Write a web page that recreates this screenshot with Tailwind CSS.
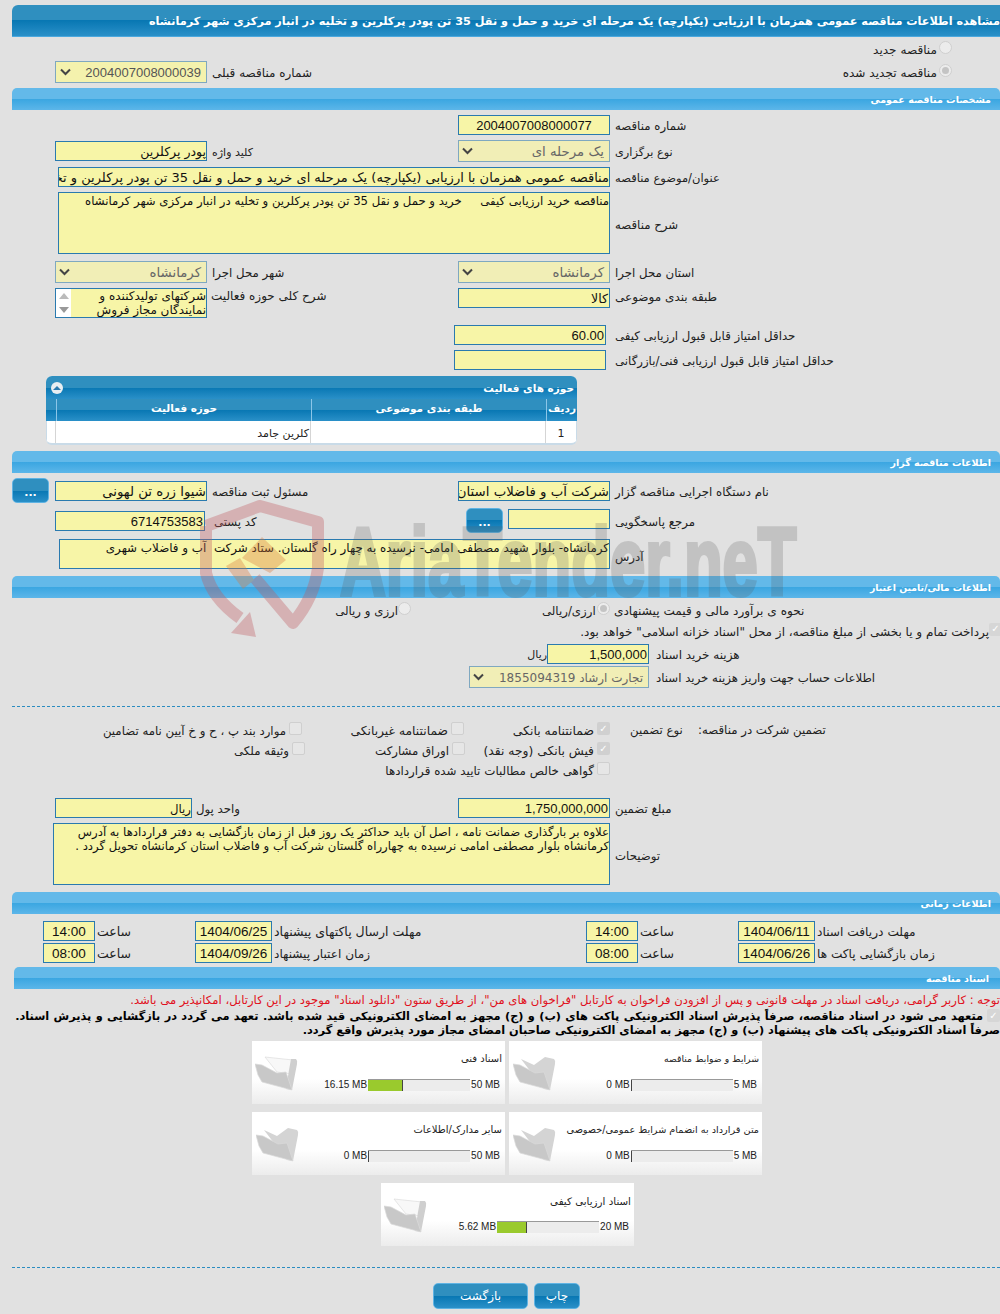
<!DOCTYPE html>
<html lang="fa">
<head>
<meta charset="utf-8">
<script src="https://cdn.jsdelivr.net/npm/@tailwindcss/browser@4"></script>
<title>مشاهده اطلاعات مناقصه</title>
</head>
<body class="m-0">
<div class="relative w-[1000px] h-[1314px] overflow-hidden bg-[#e1e1e1] text-[11.75px] leading-[16px] text-[#222] font-['DejaVu_Sans',sans-serif] pt-[5px] [&_span[dir=rtl]]:pt-[2px] [&_span]:whitespace-nowrap">

<!-- title -->
<div dir="rtl" class="ml-[12px] h-[32px] rounded-tl-[6px] overflow-hidden border-b border-[#4aa8de] bg-[linear-gradient(#2f8fbf_0,#2f8fbf_50%,#0877b3_50%,#2a90c8_100%)] text-white font-bold text-[11.25px] leading-[33px] whitespace-nowrap">مشاهده اطلاعات مناقصه عمومی همزمان با ارزیابی (یکپارچه) یک مرحله ای خرید و حمل و نقل 35 تن پودر پرکلرین و تخلیه در انبار مرکزی شهر کرمانشاه</div>

<!-- radios -->
<div class="mt-[3px] h-[18px] flex justify-end items-center pr-[48px] gap-[2px]">
  <span dir="rtl" class="text-[12.1px]">مناقصه جدید</span>
  <span class="size-[13px] rounded-full border border-[#cfcfcf] bg-[#ececec] -mt-[3px]"></span>
</div>
<div class="mt-[3px] h-[22px] grid grid-cols-[458px_1fr] items-center">
  <div class="flex items-center pl-[55px] gap-[5px]">
    <div class="w-[152px] h-[22px] border border-[#7fa8c0] bg-[#f4f2ad] flex items-center justify-between pl-[4px] pr-[5px] text-[#555]"><svg class="w-[11px] h-[8px]" viewBox="0 0 11 8"><path d="M1 1.5 5.5 6 10 1.5" fill="none" stroke="#444" stroke-width="2"/></svg><span class="pt-[2px] text-[13px] font-['Liberation_Sans',sans-serif]">2004007008000039</span></div>
    <span dir="rtl" class="text-[12px]">شماره مناقصه قبلی</span>
  </div>
  <div class="flex justify-end items-center pr-[48px] gap-[2px]">
    <span dir="rtl" class="text-[12.1px]">مناقصه تجدید شده</span>
    <span class="size-[13px] rounded-full border border-[#cfcfcf] bg-[#ececec] -mt-[3px] flex items-center justify-center"><span class="size-[7px] rounded-full bg-[#c4c4c4]"></span></span>
  </div>
</div>

<!-- section -->
<div dir="rtl" class="mt-[5px] ml-[12px] h-[22px] rounded-t-[5px] bg-[linear-gradient(#63b9e9_0,#63b9e9_50%,#3aa6e1_50%,#5cb6e9_100%)] text-white font-bold text-[9.5px] leading-[24px] pr-[9px]">مشخصات مناقصه عمومی</div>

<div class="mt-[5px] h-[20px] flex items-center pl-[458px] gap-[5px]">
  <div class="w-[152px] h-[20px] border border-[#2a7aaf] bg-[#f7f5a7] text-center text-[13px] leading-[20px] text-[#111] font-['Liberation_Sans',sans-serif]">2004007008000077</div>
  <span dir="rtl">شماره مناقصه</span>
</div>

<div class="mt-[5px] h-[22px] grid grid-cols-[458px_1fr] items-center">
  <div class="flex items-center pl-[55px] gap-[5px]">
    <div dir="rtl" class="w-[152px] h-[20px] border border-[#2a7aaf] bg-[#f7f5a7] overflow-hidden whitespace-nowrap text-[12.5px] leading-[20px] text-[#111]">پودر پرکلرین</div>
    <span dir="rtl" class="text-[11px] mt-[2px]">کلید واژه</span>
  </div>
  <div class="flex items-center gap-[5px]">
    <div class="w-[152px] h-[22px] border border-[#7fa8c0] bg-[#f1eeb6] flex items-center justify-between pl-[3px] pr-[5px] text-[#666]"><svg class="w-[11px] h-[8px]" viewBox="0 0 11 8"><path d="M1 1.5 5.5 6 10 1.5" fill="none" stroke="#444" stroke-width="2"/></svg><span dir="rtl" class="text-[13.3px]">یک مرحله ای</span></div>
    <span dir="rtl" class="text-[11.3px] mt-[2px]">نوع برگزاری</span>
  </div>
</div>

<div class="mt-[5px] h-[20px] flex items-center pl-[58px] gap-[5px]">
  <div dir="rtl" class="w-[552px] h-[20px] border border-[#2a7aaf] bg-[#f7f5a7] overflow-hidden whitespace-nowrap text-[13px] leading-[20px] text-[#111]">مناقصه عمومی همزمان با ارزیابی (یکپارچه) یک مرحله ای خرید و حمل و نقل 35 تن پودر پرکلرین و تخلیه در انبار مرکزی شهر کرمانشاه</div>
  <span dir="rtl" class="text-[11.5px]">عنوان/موضوع مناقصه</span>
</div>

<div class="mt-[5px] h-[62px] flex items-center pl-[58px] gap-[5px]">
  <div dir="rtl" class="w-[552px] h-[62px] border border-[#2a7aaf] bg-[#f7f5a7] overflow-hidden whitespace-pre text-[11.7px] leading-[16px] text-[#111]">مناقصه خرید ارزیابی کیفی     خرید و حمل و نقل 35 تن پودر پرکلرین و تخلیه در انبار مرکزی شهر کرمانشاه</div>
  <span dir="rtl" class="mt-[1px]">شرح مناقصه</span>
</div>

<div class="mt-[7px] h-[22px] grid grid-cols-[458px_1fr] items-center">
  <div class="flex items-center pl-[55px] gap-[5px]">
    <div class="w-[152px] h-[22px] border border-[#7fa8c0] bg-[#f1eeb6] flex items-center justify-between pl-[3px] pr-[5px] text-[#666]"><svg class="w-[11px] h-[8px]" viewBox="0 0 11 8"><path d="M1 1.5 5.5 6 10 1.5" fill="none" stroke="#444" stroke-width="2"/></svg><span dir="rtl" class="text-[13.3px]">کرمانشاه</span></div>
    <span dir="rtl">شهر محل اجرا</span>
  </div>
  <div class="flex items-center gap-[5px]">
    <div class="w-[152px] h-[22px] border border-[#7fa8c0] bg-[#f1eeb6] flex items-center justify-between pl-[3px] pr-[5px] text-[#666]"><svg class="w-[11px] h-[8px]" viewBox="0 0 11 8"><path d="M1 1.5 5.5 6 10 1.5" fill="none" stroke="#444" stroke-width="2"/></svg><span dir="rtl" class="text-[13.3px]">کرمانشاه</span></div>
    <span dir="rtl">استان محل اجرا</span>
  </div>
</div>

<div class="mt-[5px] h-[30px] grid grid-cols-[458px_1fr] items-start">
  <div class="flex items-start pl-[55px] gap-[4px]">
    <div class="w-[152px] h-[30px] border border-[#2a7aaf] bg-[#f7f5a7] flex overflow-hidden">
      <div class="w-[15px] shrink-0 bg-white flex flex-col justify-between items-center py-[4px]">
        <span class="w-0 h-0 border-x-[5px] border-x-transparent border-b-[6px] border-b-[#bbb]"></span>
        <span class="w-0 h-0 border-x-[5px] border-x-transparent border-t-[6px] border-t-[#999]"></span>
      </div>
      <div dir="rtl" class="flex-1 text-[12px] leading-[14px] text-[#111]">شرکتهای تولیدکننده و نمایندگان مجاز فروش</div>
    </div>
    <span dir="rtl" class="text-[12px] -mt-[2px]">شرح کلی حوزه فعالیت</span>
  </div>
  <div class="flex items-center gap-[5px]">
    <div dir="rtl" class="w-[152px] h-[20px] border border-[#2a7aaf] bg-[#f7f5a7] text-[12.5px] leading-[20px] text-[#111] pr-[1px]">کالا</div>
    <span dir="rtl" class="text-[12px] -mt-[4px]">طبقه بندی موضوعی</span>
  </div>
</div>

<div class="mt-[7px] h-[20px] flex items-center pl-[454px]">
  <div class="w-[152px] h-[20px] border border-[#2a7aaf] bg-[#f7f5a7] text-right pr-[1px] text-[13px] leading-[20px] text-[#111] font-['Liberation_Sans',sans-serif]">60.00</div>
  <span dir="rtl" class="ml-[9px]">حداقل امتیاز قابل قبول ارزیابی کیفی</span>
</div>
<div class="mt-[5px] h-[20px] flex items-center pl-[454px]">
  <div class="w-[152px] h-[20px] border border-[#2a7aaf] bg-[#f7f5a7]"></div>
  <span dir="rtl" class="ml-[9px]">حداقل امتیاز قابل قبول ارزیابی فنی/بازرگانی</span>
</div>

<!-- activity table -->
<div dir="rtl" class="mt-[6px] ml-[46px] w-[531px] h-[69px] rounded-[6px] border-b-2 border-[#c9dbe8] overflow-hidden bg-white">
  <div class="h-[23px] flex items-center justify-between pr-[3px] pl-[5px] bg-[linear-gradient(#2f8fbf_0,#2f8fbf_50%,#0877b3_50%,#2a90c8_100%)] text-white font-bold text-[10.5px]">
    <span>حوزه های فعالیت</span>
    <span class="size-[12px] rounded-full bg-[#e8eef2] flex items-center justify-center"><span class="w-0 h-0 border-x-[4px] border-x-transparent border-b-[4px] border-b-[#2a7aaf]"></span></span>
  </div>
  <div class="h-[22px] grid grid-cols-[31px_235px_255px_10px] bg-[linear-gradient(#2f8fbf_0,#2f8fbf_50%,#0877b3_50%,#2a90c8_100%)] text-white font-bold text-[10.5px] leading-[19px] text-center">
    <div class="border-l border-[#8cc6e8]">ردیف</div>
    <div class="border-l border-[#8cc6e8]">طبقه بندی موضوعی</div>
    <div class="border-l border-[#8cc6e8]">حوزه فعالیت</div>
    <div></div>
  </div>
  <div class="h-[22px] grid grid-cols-[31px_235px_255px_10px] text-[11px] leading-[26px] border-x border-[#c9dbe8]">
    <div class="border-l border-[#d5d5d5] text-center">1</div>
    <div class="border-l border-[#d5d5d5]"></div>
    <div class="border-l border-[#d5d5d5] pr-[1px]">کلرین جامد</div>
    <div></div>
  </div>
</div>

<div dir="rtl" class="mt-[6px] ml-[12px] h-[22px] rounded-t-[5px] bg-[linear-gradient(#63b9e9_0,#63b9e9_50%,#3aa6e1_50%,#5cb6e9_100%)] text-white font-bold text-[9.5px] leading-[24px] pr-[9px]">اطلاعات مناقصه گزار</div>

<div class="mt-[5px] h-[25px] grid grid-cols-[458px_1fr] items-center">
  <div class="flex items-center pl-[12px]">
    <div class="w-[37px] h-[25px] rounded-[5px] border border-[#5fb3e3] bg-[linear-gradient(#2f8fbf_0,#2f8fbf_50%,#0877b3_50%,#2a90c8_100%)] text-white font-bold text-[11px] text-center leading-[28px]">...</div>
    <div dir="rtl" class="ml-[6px] w-[152px] h-[20px] border border-[#2a7aaf] bg-[#f7f5a7] overflow-hidden whitespace-nowrap text-[13.3px] leading-[20px] text-[#111]">شیوا زره تن لهونی</div>
    <span dir="rtl" class="ml-[5px]">مسئول ثبت مناقصه</span>
  </div>
  <div class="flex items-center gap-[5px]">
    <div dir="rtl" class="w-[152px] h-[20px] border border-[#2a7aaf] bg-[#f7f5a7] overflow-hidden whitespace-nowrap text-[13.3px] leading-[20px] text-[#111]">شرکت آب و فاضلاب استان کرمانشاه</div>
    <span dir="rtl">نام دستگاه اجرایی مناقصه گزار</span>
  </div>
</div>

<div class="mt-[5px] h-[25px] grid grid-cols-[458px_1fr] items-center">
  <div class="flex items-center pl-[55px]">
    <div class="w-[150px] h-[20px] border border-[#2a7aaf] bg-[#f7f5a7] text-right pr-[1px] text-[13px] leading-[20px] text-[#111] font-['Liberation_Sans',sans-serif]">6714753583</div>
    <span dir="rtl" class="ml-[9px]">کد پستی</span>
  </div>
  <div class="flex items-center pl-[8px]">
    <div class="w-[37px] h-[25px] rounded-[5px] border border-[#5fb3e3] bg-[linear-gradient(#2f8fbf_0,#2f8fbf_50%,#0877b3_50%,#2a90c8_100%)] text-white font-bold text-[11px] text-center leading-[28px]">...</div>
    <div class="ml-[5px] w-[102px] h-[20px] -mt-[3px] border border-[#2a7aaf] bg-[#f7f5a7]"></div>
    <span dir="rtl" class="ml-[5px]">مرجع پاسخگویی</span>
  </div>
</div>

<div class="mt-[6px] h-[30px] flex items-center pl-[59px] gap-[5px]">
  <div dir="rtl" class="w-[551px] h-[30px] border border-[#2a7aaf] bg-[#f7f5a7] overflow-hidden whitespace-pre text-[11.9px] leading-[16px] text-[#111]">کرمانشاه- بلوار شهید مصطفی امامی- نرسیده به چهار راه گلستان. ستاد شرکت  آب و فاضلاب شهری</div>
  <span dir="rtl" class="mt-[3px]">آدرس</span>
</div>

<div dir="rtl" class="mt-[7px] ml-[12px] h-[22px] rounded-t-[5px] bg-[linear-gradient(#63b9e9_0,#63b9e9_50%,#3aa6e1_50%,#5cb6e9_100%)] text-white font-bold text-[9.3px] leading-[24px] pr-[9px]">اطلاعات مالی/تامین اعتبار</div>

<div class="mt-[2px] h-[20px] flex items-center pl-[336px]">
  <span dir="rtl" class="w-[62px] text-left">ارزی و ریالی</span>
  <span class="size-[13px] rounded-full border border-[#cfcfcf] bg-[#ececec] -mt-[3px]"></span>
  <span dir="rtl" class="ml-[131px] w-[55px] text-left">ارزی/ریالی</span>
  <span class="size-[13px] rounded-full border border-[#cfcfcf] bg-[#ececec] -mt-[3px] flex items-center justify-center"><span class="size-[7px] rounded-full bg-[#c4c4c4]"></span></span>
  <span dir="rtl" class="ml-[4px] text-[12.1px]">نحوه ی برآورد مالی و قیمت پیشنهادی</span>
</div>

<div class="mt-[1px] h-[19px] flex justify-end items-center">
  <span dir="rtl" class="whitespace-pre text-[12px]">پرداخت تمام و یا بخشی از مبلغ مناقصه، از محل "اسناد خزانه اسلامی" خواهد بود.</span>
  <span class="shrink-0 size-[13px] -mr-[2px] rounded-[2px] bg-[#d6d6d6] -mt-[3px] flex items-center justify-center text-white text-[10px] font-bold">✓</span>
</div>

<div class="mt-[4px] h-[20px] flex items-center pl-[528px]">
  <span dir="rtl" class="w-[19px] text-left text-[11px]">ریال</span>
  <div class="w-[102px] h-[20px] border border-[#2a7aaf] bg-[#f7f5a7] text-right pr-[1px] text-[13px] leading-[20px] text-[#111] font-['Liberation_Sans',sans-serif]">1,500,000</div>
  <span dir="rtl" class="ml-[7px] text-[12px]">هزینه خرید اسناد</span>
</div>

<div class="mt-[2px] h-[22px] flex items-center pl-[469px]">
  <div class="w-[180px] h-[22px] border border-[#7fa8c0] bg-[#f1eeb6] flex items-center justify-between pl-[3px] pr-[5px] text-[#666]"><svg class="w-[11px] h-[8px]" viewBox="0 0 11 8"><path d="M1 1.5 5.5 6 10 1.5" fill="none" stroke="#444" stroke-width="2"/></svg><span dir="rtl" class="text-[12px]">تجارت ارشاد 1855094319</span></div>
  <span dir="rtl" class="ml-[7px]">اطلاعات حساب جهت واریز هزینه خرید اسناد</span>
</div>

<div class="mt-[18px] ml-[12px] h-0 border-t border-dashed border-[#2a8cc0]"></div>

<!-- guarantee -->
<div class="mt-[13px] h-[20px] grid grid-cols-[104px_198px_162px_146px_20px_53px_15px_1fr] items-center">
  <span></span>
  <span dir="rtl" class="flex items-center"><span class="size-[13px] rounded-[2px] border border-[#cfcfcf] bg-[#e6e6e6] -mt-[5px] shrink-0"></span><span class="mr-[3px]">موارد بند پ ، ح و خ آیین نامه تضامین</span></span>
  <span dir="rtl" class="flex items-center"><span class="size-[13px] rounded-[2px] border border-[#cfcfcf] bg-[#e6e6e6] -mt-[5px] shrink-0"></span><span class="mr-[3px] text-[12.3px]">ضمانتنامه غیربانکی</span></span>
  <span dir="rtl" class="flex items-center"><span class="size-[13px] rounded-[2px] bg-[#d0d0d0] text-white text-[10px] font-bold leading-[13px] text-center -mt-[5px] shrink-0">✓</span><span class="mr-[3px] text-[12.4px]">ضمانتنامه بانکی</span></span>
  <span></span>
  <span dir="rtl" class="text-left -mt-[2px]">نوع تضمین</span>
  <span></span>
  <span dir="rtl" class="text-left -mt-[2px]">تضمین شرکت در مناقصه:</span>
</div>
<div class="h-[20px] grid grid-cols-[104px_201px_160px_145px] items-center">
  <span></span>
  <span dir="rtl" class="flex items-center"><span class="size-[13px] rounded-[2px] border border-[#cfcfcf] bg-[#e6e6e6] -mt-[5px] shrink-0"></span><span class="mr-[3px]">وثیقه ملکی</span></span>
  <span dir="rtl" class="flex items-center"><span class="size-[13px] rounded-[2px] border border-[#cfcfcf] bg-[#e6e6e6] -mt-[5px] shrink-0"></span><span class="mr-[3px]">اوراق مشارکت</span></span>
  <span dir="rtl" class="flex items-center"><span class="size-[13px] rounded-[2px] bg-[#d0d0d0] text-white text-[10px] font-bold leading-[13px] text-center -mt-[5px] shrink-0">✓</span><span class="mr-[3px] text-[12.3px]">فیش بانکی (وجه نقد)</span></span>
</div>
<div class="h-[20px] pl-[364px] flex items-center">
  <span dir="rtl" class="flex items-center w-[246px]"><span class="size-[13px] rounded-[2px] border border-[#cfcfcf] bg-[#e6e6e6] -mt-[5px] shrink-0"></span><span class="mr-[3px] text-[11.9px]">گواهی خالص مطالبات تایید شده قراردادها</span></span>
</div>

<div class="mt-[18px] h-[20px] grid grid-cols-[458px_1fr] items-center">
  <div class="flex items-center pl-[55px]">
    <div dir="rtl" class="w-[137px] h-[20px] border border-[#2a7aaf] bg-[#f7f5a7] text-[11.7px] leading-[20px] text-[#111]">ریال</div>
    <span dir="rtl" class="ml-[4px]">واحد پول</span>
  </div>
  <div class="flex items-center gap-[5px]">
    <div class="w-[152px] h-[20px] border border-[#2a7aaf] bg-[#f7f5a7] text-right pr-[1px] text-[13px] leading-[20px] text-[#111] font-['Liberation_Sans',sans-serif]">1,750,000,000</div>
    <span dir="rtl">مبلغ تضمین</span>
  </div>
</div>

<div class="mt-[5px] h-[62px] flex items-center pl-[53px] gap-[5px]">
  <div dir="rtl" class="w-[557px] h-[62px] border border-[#2a7aaf] bg-[#f7f5a7] overflow-hidden whitespace-nowrap text-[11.7px] leading-[14px] text-[#111] pt-[1px]">علاوه بر بارگذاری ضمانت نامه ، اصل آن باید حداکثر یک روز قبل از زمان بازگشایی به دفتر قراردادها به آدرس<br>کرمانشاه بلوار مصطفی امامی نرسیده به چهارراه گلستان شرکت آب و فاضلاب استان کرمانشاه تحویل گردد .</div>
  <span dir="rtl" class="mt-[1px]">توضیحات</span>
</div>

<div dir="rtl" class="mt-[7px] ml-[12px] h-[22px] rounded-t-[5px] bg-[linear-gradient(#63b9e9_0,#63b9e9_50%,#3aa6e1_50%,#5cb6e9_100%)] text-white font-bold text-[9.5px] leading-[24px] pr-[9px]">اطلاعات زمانی</div>

<div class="mt-[7px] h-[20px] grid grid-cols-[43px_152px_391px_152px_1fr] items-center">
  <span></span>
  <div class="flex items-center gap-[2px]"><div class="w-[52px] h-[20px] border border-[#2a7aaf] bg-[#f7f5a7] text-center text-[13.5px] leading-[20px] text-[#111] font-['Liberation_Sans',sans-serif]">14:00</div><span dir="rtl" class="text-[12.5px]">ساعت</span></div>
  <div class="flex items-center gap-[2px]"><div class="w-[77px] h-[20px] border border-[#2a7aaf] bg-[#f7f5a7] text-center text-[13.5px] leading-[20px] text-[#111] font-['Liberation_Sans',sans-serif]">1404/06/25</div><span dir="rtl" class="text-[12.5px]">مهلت ارسال پاکتهای پیشنهاد</span></div>
  <div class="flex items-center gap-[2px]"><div class="w-[52px] h-[20px] border border-[#2a7aaf] bg-[#f7f5a7] text-center text-[13.5px] leading-[20px] text-[#111] font-['Liberation_Sans',sans-serif]">14:00</div><span dir="rtl" class="text-[12.5px]">ساعت</span></div>
  <div class="flex items-center gap-[2px]"><div class="w-[77px] h-[20px] border border-[#2a7aaf] bg-[#f7f5a7] text-center text-[13.5px] leading-[20px] text-[#111] font-['Liberation_Sans',sans-serif]">1404/06/11</div><span dir="rtl" class="text-[12.2px]">مهلت دریافت اسناد</span></div>
</div>
<div class="mt-[2px] h-[20px] grid grid-cols-[43px_152px_391px_152px_1fr] items-center">
  <span></span>
  <div class="flex items-center gap-[2px]"><div class="w-[52px] h-[20px] border border-[#2a7aaf] bg-[#f7f5a7] text-center text-[13.5px] leading-[20px] text-[#111] font-['Liberation_Sans',sans-serif]">08:00</div><span dir="rtl" class="text-[12.5px]">ساعت</span></div>
  <div class="flex items-center gap-[2px]"><div class="w-[77px] h-[20px] border border-[#2a7aaf] bg-[#f7f5a7] text-center text-[13.5px] leading-[20px] text-[#111] font-['Liberation_Sans',sans-serif]">1404/09/26</div><span dir="rtl" class="text-[12.1px]">زمان اعتبار پیشنهاد</span></div>
  <div class="flex items-center gap-[2px]"><div class="w-[52px] h-[20px] border border-[#2a7aaf] bg-[#f7f5a7] text-center text-[13.5px] leading-[20px] text-[#111] font-['Liberation_Sans',sans-serif]">08:00</div><span dir="rtl" class="text-[12.5px]">ساعت</span></div>
  <div class="flex items-center gap-[2px]"><div class="w-[77px] h-[20px] border border-[#2a7aaf] bg-[#f7f5a7] text-center text-[13.5px] leading-[20px] text-[#111] font-['Liberation_Sans',sans-serif]">1404/06/26</div><span dir="rtl" class="text-[12.1px]">زمان بازگشایی پاکت ها</span></div>
</div>

<div dir="rtl" class="mt-[4px] ml-[14px] h-[22px] rounded-t-[5px] bg-[linear-gradient(#63b9e9_0,#63b9e9_50%,#3aa6e1_50%,#5cb6e9_100%)] text-white font-bold text-[9.5px] leading-[24px] pr-[11px]">اسناد مناقصه</div>

<div dir="rtl" class="mt-[2px] h-[18px] whitespace-nowrap text-[11.63px] leading-[18px] text-[#e01020]">توجه : کاربر گرامی، دریافت اسناد در مهلت قانونی و پس از افزودن فراخوان به کارتابل "فراخوان های من"، از طریق ستون "دانلود اسناد" موجود در این کارتابل، امکانپذیر می باشد.</div>

<div dir="rtl" class="h-[28px] whitespace-nowrap font-bold text-[11.35px] leading-[14px] text-black">
  <span class="inline-block size-[13px] rounded-[2px] bg-[#d6d6d6] text-white text-[10px] leading-[13px] text-center align-top">✓</span> <span class="[word-spacing:.4px]">متعهد می شود در اسناد مناقصه، صرفاً پذیرش اسناد الکترونیکی پاکت های (ب) و (ج) مجهز به امضای الکترونیکی قید شده باشد. تعهد می گردد در بازگشایی و پذیرش اسناد.</span><br>صرفاً اسناد الکترونیکی پاکت های پیشنهاد (ب) و (ج) مجهز به امضای الکترونیکی صاحبان امضای مجاز مورد پذیرش واقع گردد.
</div>

<!-- cards -->
<div class="mt-[4px] flex pl-[252px] gap-[4px]">
  <div class="w-[253px] h-[63px] flex bg-[linear-gradient(#fff_0,#fff_60%,#ececec_100%)]">
    <svg class="w-[43px] h-[35px] ml-[3px] mt-[15px] shrink-0" viewBox="0 0 43 35"><path d="M10 1 L38 4 L37 18 L22 16 Z" fill="#f8f8f8" stroke="#dcdcdc" stroke-width=".7"/><path d="M36 3 L41 3 Q43 5 42 8 L37 34 L31 33 L34 14 Z" fill="#cfcfcf"/><path d="M0 8 L7 9 L22 17 L31 16 L37 34 L7 26 L3 19 Z" fill="#c8c8c8" stroke="#dadada" stroke-width=".7"/></svg>
    <div class="flex-1 flex flex-col items-end pr-[5px] text-[10px]">
      <span dir="rtl" class="mt-[8px] mr-[-2px] h-[16px]">اسناد فنی</span>
      <div class="mt-[12px] flex items-center gap-[1px] font-['Liberation_Sans',sans-serif]"><span>16.15 MB</span><div class="w-[102px] h-[12px] border-t border-[#999] bg-[#ececec]"><div class="w-[35px] h-[11px] bg-[#9aca2d] border-r border-[#444]"></div></div><span>50 MB</span></div>
    </div>
  </div>
  <div class="w-[253px] h-[63px] flex bg-[linear-gradient(#fff_0,#fff_60%,#ececec_100%)]">
    <svg class="w-[43px] h-[35px] ml-[4px] mt-[15px] shrink-0" viewBox="0 0 43 35"><path d="M8 3 L21 9 L32 1 L41 3 Q43 5 42 8 L37 34 L31 33 Z" fill="#d4d4d4"/><path d="M0 8 L7 9 L22 17 L31 16 L37 34 L7 26 L3 19 Z" fill="#c8c8c8" stroke="#dadada" stroke-width=".7"/></svg>
    <div class="flex-1 flex flex-col items-end pr-[5px] text-[10px]">
      <span dir="rtl" class="mt-[8px] mr-[-2px] h-[16px] text-[9.3px]">شرایط و ضوابط مناقصه</span>
      <div class="mt-[12px] flex items-center gap-[1px] font-['Liberation_Sans',sans-serif]"><span>0 MB</span><div class="w-[102px] h-[12px] border-t border-[#999] bg-[#ececec]"><div class="w-[1px] h-[11px] bg-[#444]"></div></div><span>5 MB</span></div>
    </div>
  </div>
</div>
<div class="mt-[8px] flex pl-[252px] gap-[4px]">
  <div class="w-[253px] h-[63px] flex bg-[linear-gradient(#fff_0,#fff_60%,#ececec_100%)]">
    <svg class="w-[43px] h-[35px] ml-[4px] mt-[15px] shrink-0" viewBox="0 0 43 35"><path d="M8 3 L21 9 L32 1 L41 3 Q43 5 42 8 L37 34 L31 33 Z" fill="#d4d4d4"/><path d="M0 8 L7 9 L22 17 L31 16 L37 34 L7 26 L3 19 Z" fill="#c8c8c8" stroke="#dadada" stroke-width=".7"/></svg>
    <div class="flex-1 flex flex-col items-end pr-[5px] text-[10px]">
      <span dir="rtl" class="mt-[8px] mr-[-2px] h-[16px]">سایر مدارک/اطلاعات</span>
      <div class="mt-[12px] flex items-center gap-[1px] font-['Liberation_Sans',sans-serif]"><span>0 MB</span><div class="w-[102px] h-[12px] border-t border-[#999] bg-[#ececec]"><div class="w-[1px] h-[11px] bg-[#444]"></div></div><span>50 MB</span></div>
    </div>
  </div>
  <div class="w-[253px] h-[63px] flex bg-[linear-gradient(#fff_0,#fff_60%,#ececec_100%)]">
    <svg class="w-[43px] h-[35px] ml-[4px] mt-[15px] shrink-0" viewBox="0 0 43 35"><path d="M8 3 L21 9 L32 1 L41 3 Q43 5 42 8 L37 34 L31 33 Z" fill="#d4d4d4"/><path d="M0 8 L7 9 L22 17 L31 16 L37 34 L7 26 L3 19 Z" fill="#c8c8c8" stroke="#dadada" stroke-width=".7"/></svg>
    <div class="flex-1 flex flex-col items-end pr-[5px] text-[10px]">
      <span dir="rtl" class="mt-[8px] mr-[-2px] h-[16px] text-[9.7px]">متن قرارداد به انضمام شرایط عمومی/خصوصی</span>
      <div class="mt-[12px] flex items-center gap-[1px] font-['Liberation_Sans',sans-serif]"><span>0 MB</span><div class="w-[102px] h-[12px] border-t border-[#999] bg-[#ececec]"><div class="w-[1px] h-[11px] bg-[#444]"></div></div><span>5 MB</span></div>
    </div>
  </div>
</div>
<div class="mt-[8px] flex pl-[381px]">
  <div class="w-[253px] h-[63px] flex bg-[linear-gradient(#fff_0,#fff_60%,#ececec_100%)]">
    <svg class="w-[43px] h-[35px] ml-[3px] mt-[15px] shrink-0" viewBox="0 0 43 35"><path d="M10 1 L38 4 L37 18 L22 16 Z" fill="#f8f8f8" stroke="#dcdcdc" stroke-width=".7"/><path d="M36 3 L41 3 Q43 5 42 8 L37 34 L31 33 L34 14 Z" fill="#cfcfcf"/><path d="M0 8 L7 9 L22 17 L31 16 L37 34 L7 26 L3 19 Z" fill="#c8c8c8" stroke="#dadada" stroke-width=".7"/></svg>
    <div class="flex-1 flex flex-col items-end pr-[5px] text-[10px]">
      <span dir="rtl" class="mt-[8px] mr-[-2px] h-[16px] text-[10.3px]">اسناد ارزیابی کیفی</span>
      <div class="mt-[12px] flex items-center gap-[1px] font-['Liberation_Sans',sans-serif]"><span>5.62 MB</span><div class="w-[102px] h-[12px] border-t border-[#999] bg-[#ececec]"><div class="w-[30px] h-[11px] bg-[#9aca2d] border-r border-[#444]"></div></div><span>20 MB</span></div>
    </div>
  </div>
</div>

<div class="mt-[21px] ml-[12px] h-0 border-t border-dashed border-[#2a8cc0]"></div>

<div class="mt-[15px] flex pl-[433px] gap-[6px]">
  <div dir="rtl" class="w-[95px] h-[26px] rounded-[5px] border border-[#5fb3e3] bg-[linear-gradient(#2f8fbf_0,#2f8fbf_50%,#0877b3_50%,#2a90c8_100%)] text-white text-[12px] text-center leading-[25px]">بازگشت</div>
  <div dir="rtl" class="w-[46px] h-[26px] rounded-[5px] border border-[#5fb3e3] bg-[linear-gradient(#2f8fbf_0,#2f8fbf_50%,#0877b3_50%,#2a90c8_100%)] text-white text-[12px] text-center leading-[25px]">چاپ</div>
</div>

<!-- watermark -->
<div class="absolute left-[198px] top-[498px] w-[130px] h-[142px] pointer-events-none opacity-[.35]">
  <svg viewBox="0 0 130 142" class="w-full h-full" fill="none">
    <path d="M8 28 L62 8 L120 24 L120 70 Q116 100 95 125 L57 80" stroke="#bf5a60" stroke-width="12" stroke-linejoin="round"/>
    <path d="M8 28 L8 75 Q14 100 42 120" stroke="#bf5a60" stroke-width="12"/>
    <path d="M33 135 L58 139 L52 114 Z" fill="#bf5a60"/>
    <path d="M28 68 L42 60 L56 82 L45 91 Z M44 60 L64 39 L88 62 L72 75 Z" fill="#d8783c"/>
  </svg>
</div>
<div class="absolute left-[340px] top-[512px] text-[96px] leading-[100px] font-bold text-[#5a5a5a] [-webkit-text-stroke:4px_#5a5a5a] opacity-[.22] font-['Liberation_Sans',sans-serif] whitespace-nowrap pointer-events-none origin-left scale-x-[.66]">AriaTender.neT</div>

</div>
</body>
</html>
